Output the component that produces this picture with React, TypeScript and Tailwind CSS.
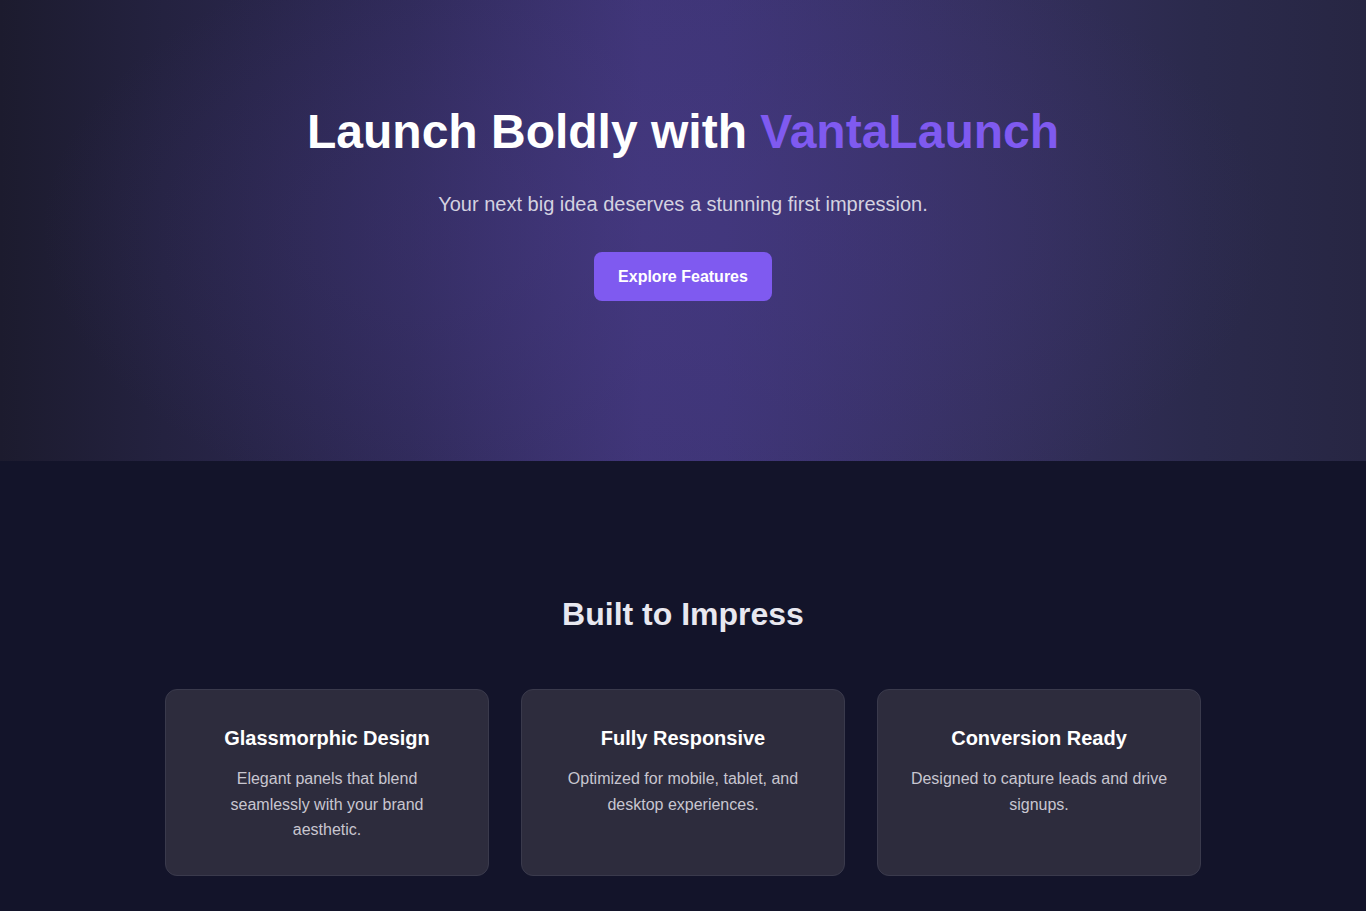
import React from "react";

const features = [
  {
    title: "Glassmorphic Design",
    desc: "Elegant panels that blend seamlessly with your brand aesthetic.",
  },
  {
    title: "Fully Responsive",
    desc: "Optimized for mobile, tablet, and desktop experiences.",
  },
  {
    title: "Conversion Ready",
    desc: "Designed to capture leads and drive signups.",
  },
];

export default function App() {
  return (
    <div className="min-h-screen bg-[#13142a] font-['Liberation_Sans',Arial,sans-serif]">
      <section className="relative h-[461px] overflow-hidden bg-[linear-gradient(90deg,#1c1b2e_0%,#242240_12%,#2f2a58_30%,#3f3577_47%,#3e3576_53%,#35305f_72%,#2b2a4c_88%,#272643_100%)]">
        <div className="absolute inset-0 bg-[radial-gradient(ellipse_45%_70%_at_48%_50%,rgba(72,58,135,0.45)_0%,rgba(72,58,135,0)_100%)]" />
        <div className="relative flex flex-col items-center pt-[103px] text-center">
          <h1 className="text-[48px] font-bold leading-[1.2] text-white">
            Launch Boldly with <span className="text-[#7f5af0]">VantaLaunch</span>
          </h1>
          <p className="mt-[29px] text-xl leading-7 text-[#d4d2e0]">
            Your next big idea deserves a stunning first impression.
          </p>
          <button className="mt-[34px] h-[49px] w-[178px] rounded-lg bg-[#7f5af0] pt-[2px] text-base font-bold text-white">
            Explore Features
          </button>
        </div>
      </section>
      <section className="pt-[134px] pb-20">
        <h2 className="text-center text-[32px] font-bold leading-[1.2] text-[#e8e8f0]">
          Built to Impress
        </h2>
        <div className="mx-auto mt-[56px] grid max-w-[1036px] grid-cols-3 gap-8">
          {features.map((f) => (
            <div
              key={f.title}
              className="rounded-xl border border-[#3a3a4c] bg-[#2d2c3d] px-8 pt-[34px] pb-[32px] text-center"
            >
              <h3 className="text-xl font-bold leading-7 text-white">{f.title}</h3>
              <p className="mt-[14px] text-base leading-[25.4px] text-[#c8c6d0]">{f.desc}</p>
            </div>
          ))}
        </div>
      </section>
    </div>
  );
}
